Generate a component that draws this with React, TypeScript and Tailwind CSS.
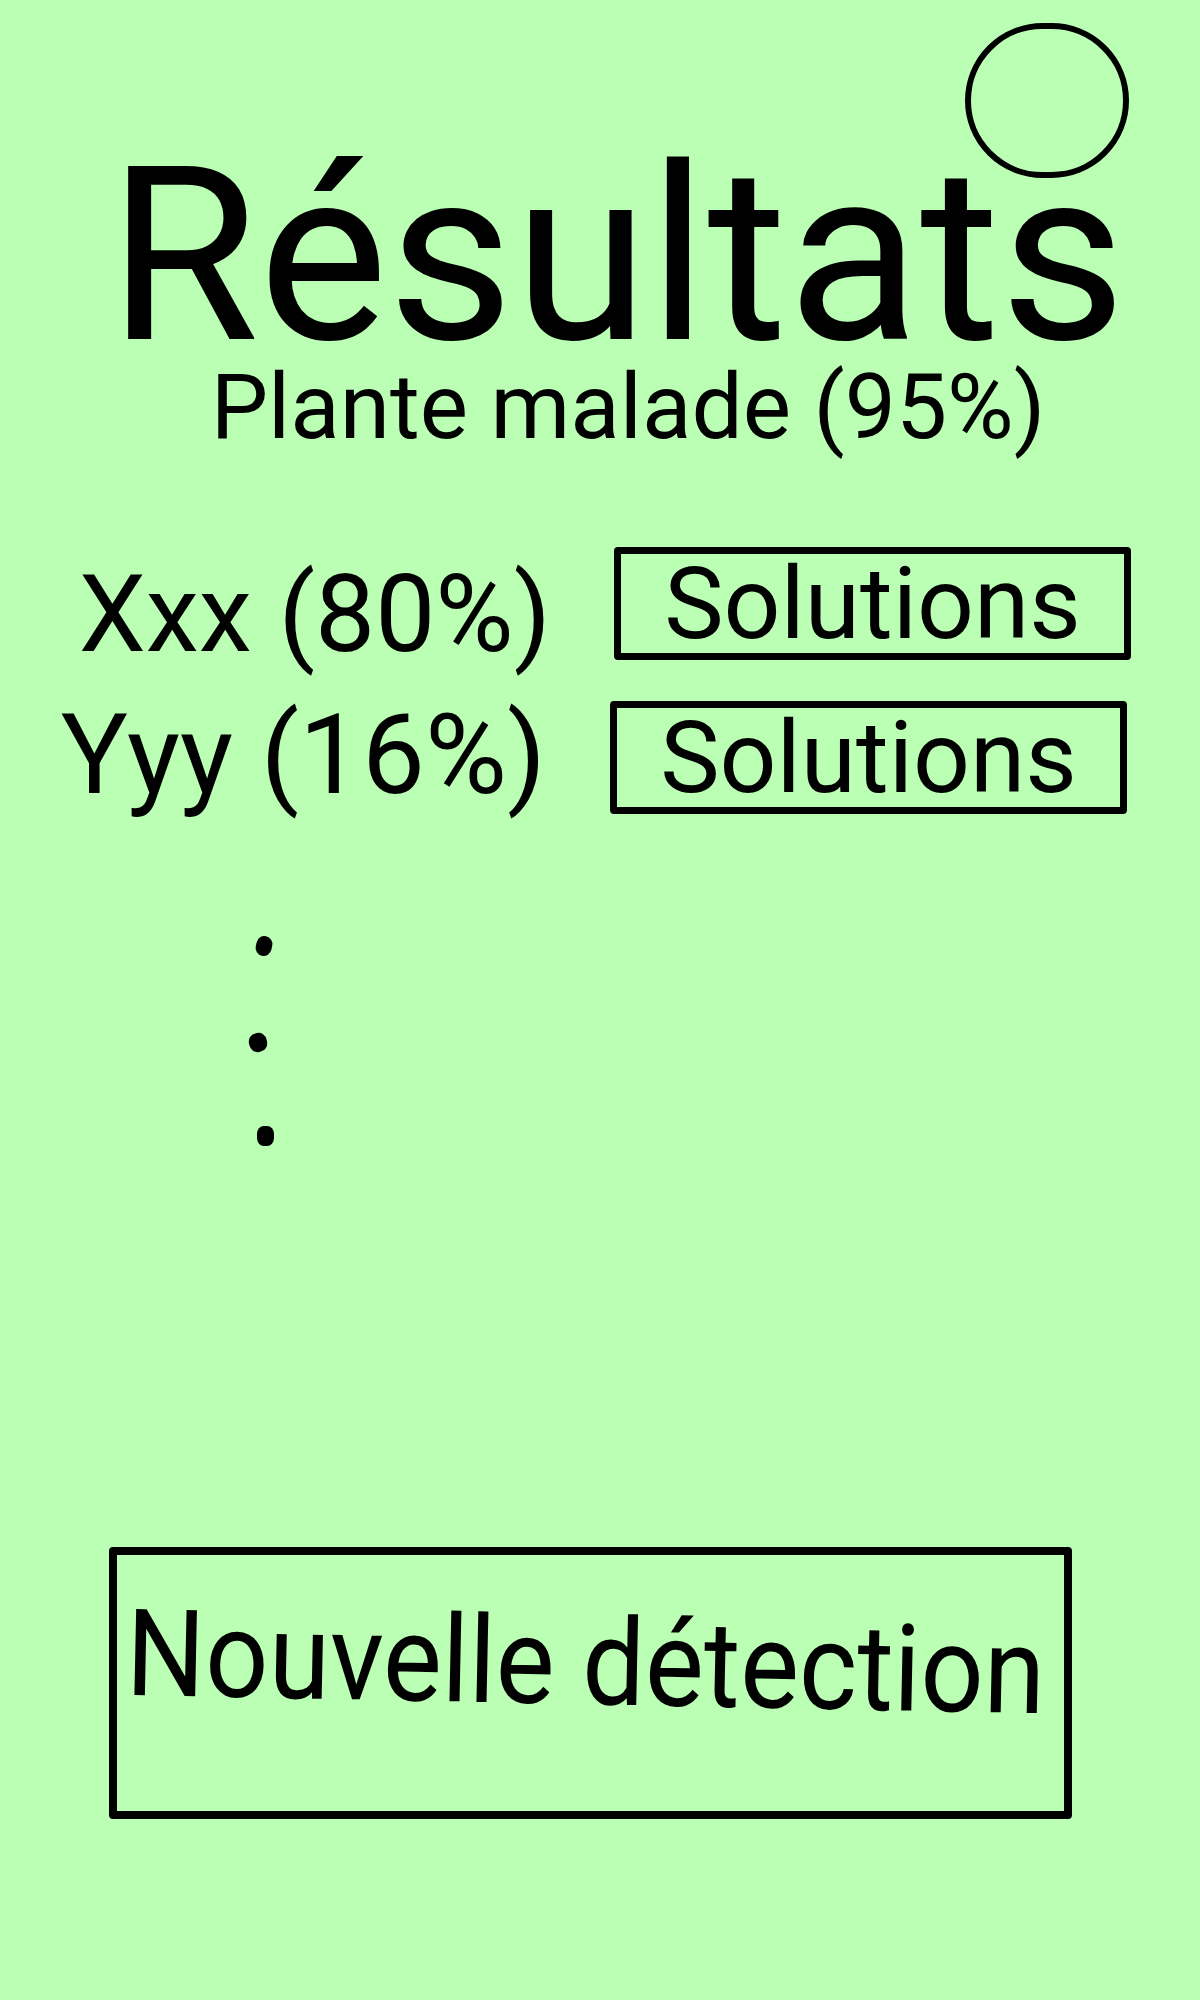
import React from "react";

type Candidate = {
  label: string;
  labelClass: string;
  boxOffset: string;
  rowGap: string;
};

const CANDIDATES: Candidate[] = [
  { label: "Xxx (80%)", labelClass: "w-[551px] mt-[14px] text-[107px]", boxOffset: "ml-[63px]", rowGap: "mt-[94px]" },
  { label: "Yyy (16%)", labelClass: "w-[546px] mt-[-2px] text-[112px]", boxOffset: "ml-[64px]", rowGap: "mt-[41px]" },
];

function CandidateRow({ candidate }: { candidate: Candidate }) {
  return (
    <div className={`flex h-[113px] items-start ${candidate.rowGap}`}>
      <div className={`${candidate.labelClass} text-right leading-none whitespace-nowrap`}>{candidate.label}</div>
      <button
        type="button"
        className={`${candidate.boxOffset} flex h-[113px] w-[517px] items-center justify-center rounded-[4px] border-[7px] border-black text-[100px] leading-none`}
      >
        Solutions
      </button>
    </div>
  );
}

export default function App() {
  return (
    <div className="relative min-h-[2000px] w-[1200px] overflow-hidden bg-[#bbffb4] font-['Roboto',sans-serif] text-black">
      {/* profile bubble */}
      <div className="absolute left-[965px] top-[23px] h-[155px] w-[164px] rounded-full border-[6px] border-black" />

      <h1 className="pt-[156px] pl-[34px] text-center text-[244px] font-normal leading-[200px]">Résultats</h1>
      <div className="mt-[6px] pl-[56px] text-center text-[91px] leading-none">Plante malade (95%)</div>

      {CANDIDATES.map((c) => (
        <CandidateRow key={c.label} candidate={c} />
      ))}

      <div className="mt-[122px] flex flex-col">
        <div className="ml-[256px] h-[20px] w-[16px] rotate-12 rounded-full bg-black" />
        <div className="ml-[249px] mt-[77px] h-[19px] w-[18px] -rotate-12 rounded-[45%] bg-black" />
        <div className="ml-[257px] mt-[74px] h-[20px] w-[17px] rounded-[40%] bg-black" />
      </div>

      <button
        type="button"
        className="ml-[109px] mt-[401px] flex h-[272px] w-[963px] items-center justify-center rounded-[4px] border-[8px] border-black pr-[10px] pb-[40px]"
      >
        <span className="rotate-[1.15deg] scale-x-[0.918] text-[121px] leading-none whitespace-nowrap">Nouvelle détection</span>
      </button>
    </div>
  );
}
